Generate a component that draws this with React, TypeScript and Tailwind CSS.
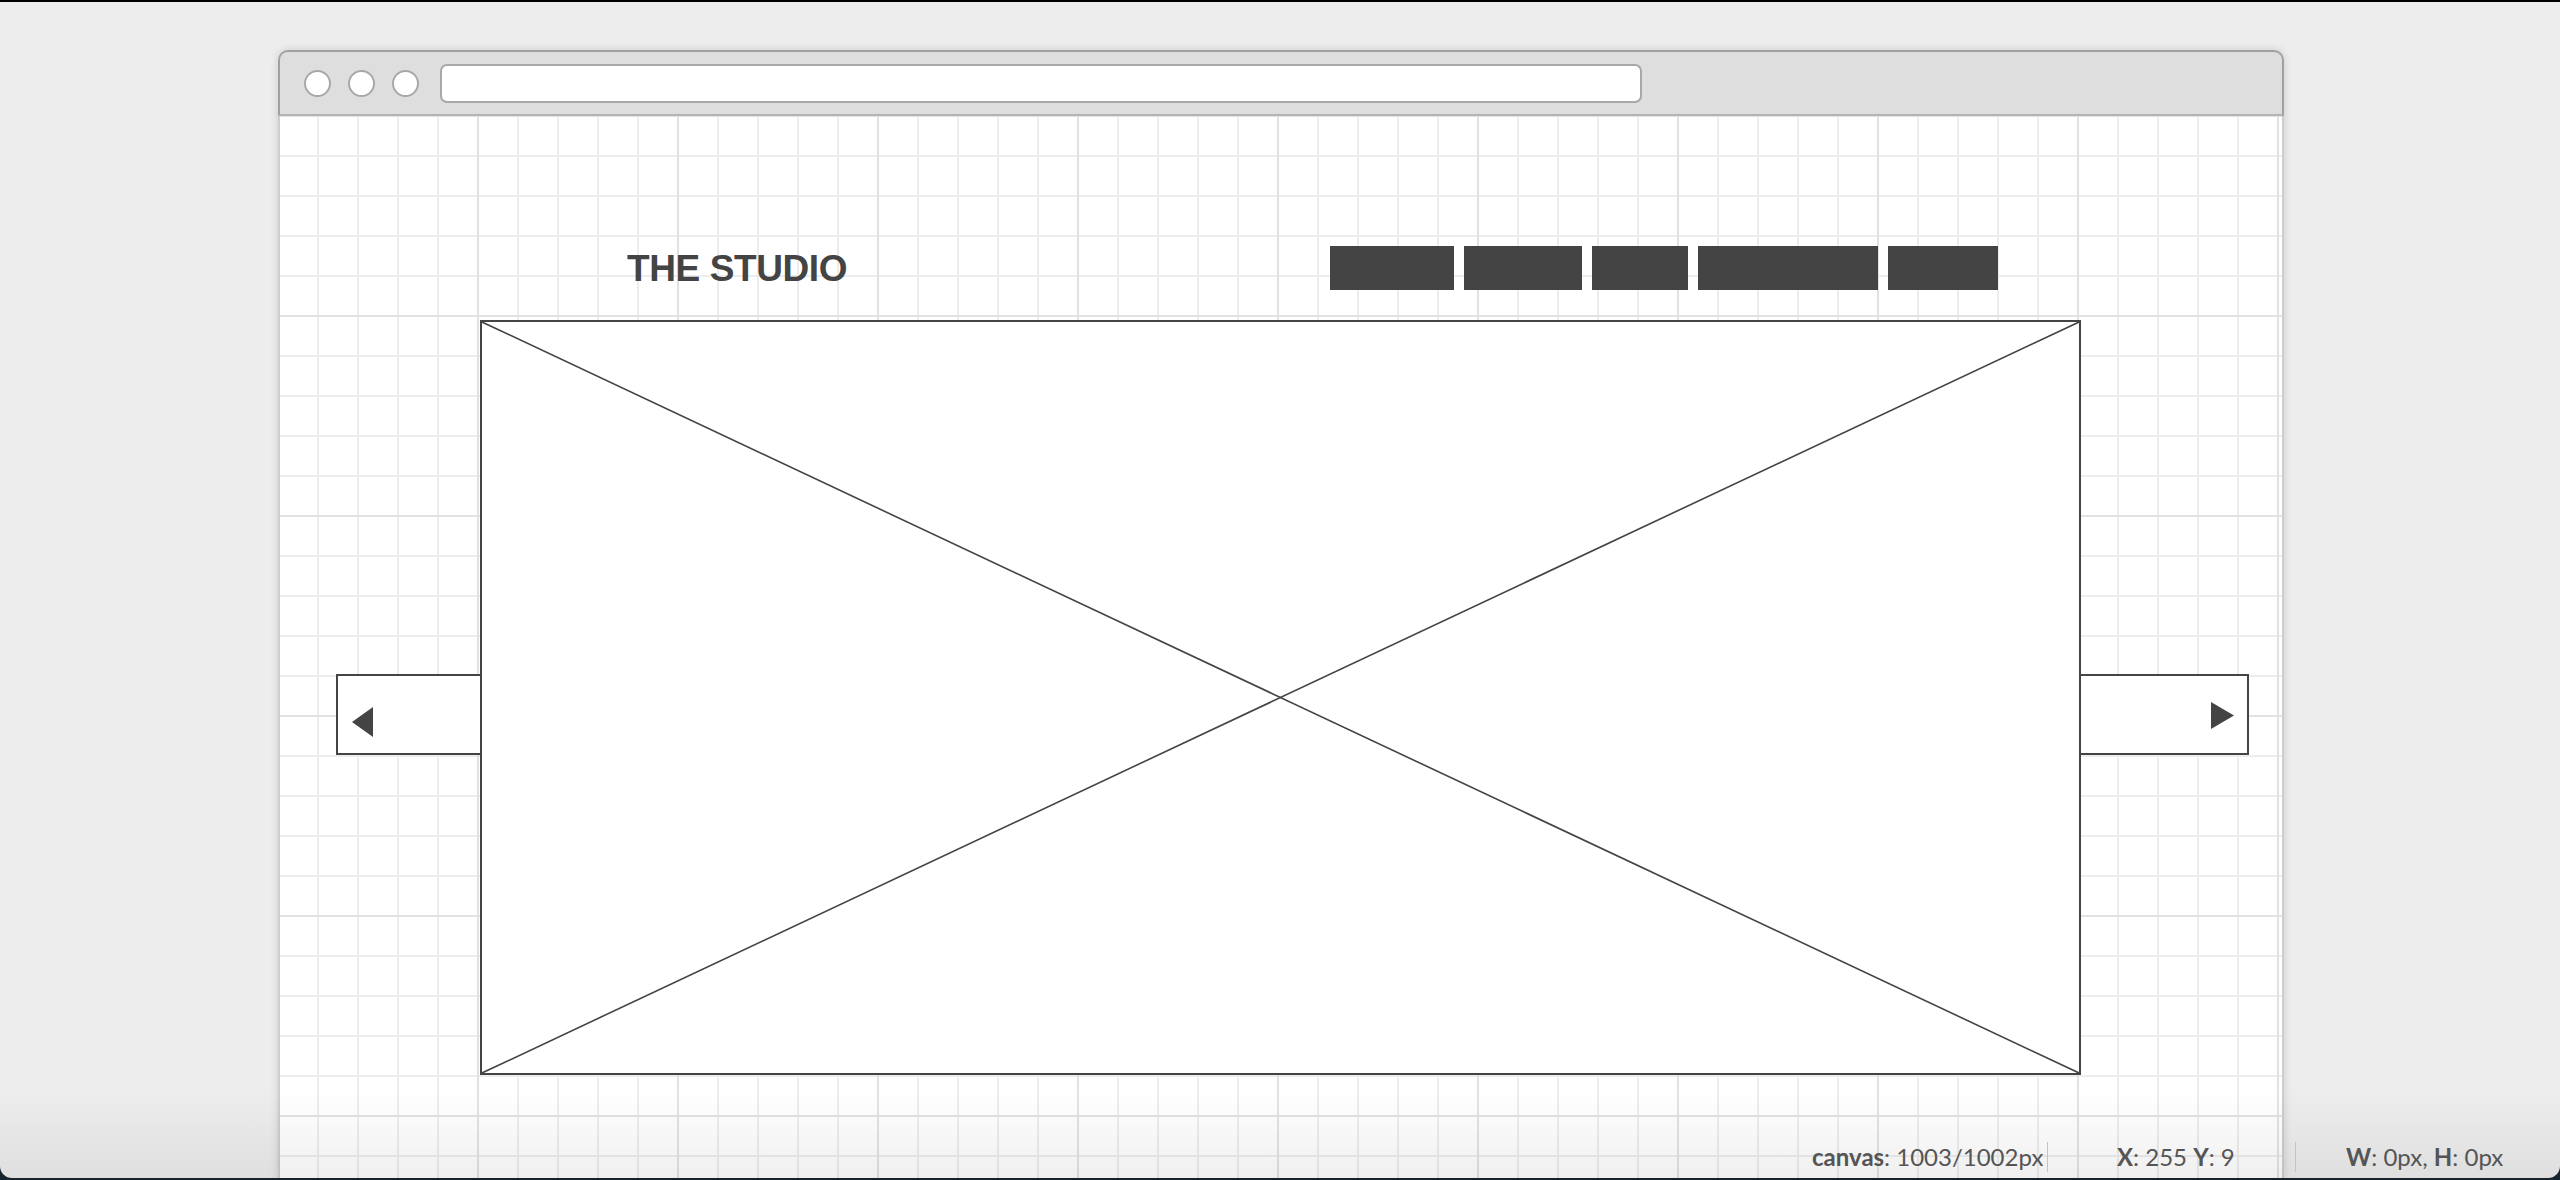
import React from 'react';

const NAV_WIDTHS = ['w-[124px]', 'w-[118px]', 'w-[96px]', 'w-[180px]', 'w-[110px]'];

const gridBg =
  '[background-image:linear-gradient(to_right,#e2e2e2_2px,transparent_2px),linear-gradient(to_bottom,#e2e2e2_2px,transparent_2px),linear-gradient(to_right,#ededed_2px,transparent_2px),linear-gradient(to_bottom,#ededed_2px,transparent_2px)] [background-size:200px_200px,200px_200px,40px_40px,40px_40px] [background-position:-3px_-1px,-3px_-1px,-3px_-1px,-3px_-1px]';

const TitleBar = () => (
  <div className="flex items-center h-[66px] bg-[#dedede] border-2 border-[#a0a0a0] border-b-[#b4b4b4] rounded-t-[10px] pl-[24px]">
    <div className="flex gap-[17px]">
      <span className="w-[27px] h-[27px] rounded-full border-2 border-[#a8a8a8] bg-white" />
      <span className="w-[27px] h-[27px] rounded-full border-2 border-[#a8a8a8] bg-white" />
      <span className="w-[27px] h-[27px] rounded-full border-2 border-[#a8a8a8] bg-white" />
    </div>
    <div className="ml-[21px] w-[1202px] h-[39px] rounded-[7px] border-2 border-[#a8a8a8] bg-white" />
  </div>
);

const Header = () => (
  <div className="flex items-start mt-[130px] h-[44px]">
    <h1 className="ml-[347px] mt-[4px] font-['Liberation_Sans',Arial,sans-serif] font-bold text-[37px] leading-[37px] tracking-[-0.4px] text-[#444444] whitespace-nowrap">
      THE STUDIO
    </h1>
    <nav className="ml-auto mr-[284px] flex gap-[10px]">
      {NAV_WIDTHS.map((w, i) => (
        <div key={i} className={`${w} h-[44px] bg-[#444444]`} />
      ))}
    </nav>
  </div>
);

const Slider = () => (
  <div className="flex items-start mt-[30px] pl-[56px]">
    <button className="mt-[354px] w-[144px] h-[81px] border-2 border-r-0 border-[#444444] bg-white flex items-start pl-[14px] pt-[31px]">
      <svg width="21" height="30" viewBox="0 0 21 30">
        <polygon points="21,0 21,30 0,15" fill="#444444" />
      </svg>
    </button>
    <div className="relative w-[1601px] h-[755px] border-2 border-[#444444] bg-white">
      <svg className="absolute inset-0 w-full h-full" viewBox="0 0 1597 751" preserveAspectRatio="none">
        <line x1="0" y1="0" x2="1597" y2="751" stroke="#444444" strokeWidth="1.6" />
        <line x1="1597" y1="0" x2="0" y2="751" stroke="#444444" strokeWidth="1.6" />
      </svg>
    </div>
    <button className="mt-[354px] w-[168px] h-[81px] border-2 border-l-0 border-[#444444] bg-white flex items-start pl-[130px] pt-[26px]">
      <svg width="23" height="27" viewBox="0 0 23 27">
        <polygon points="0,0 23,13.5 0,27" fill="#444444" />
      </svg>
    </button>
  </div>
);

const StatusBar = () => (
  <div className="absolute top-[1142px] left-[1812px] flex items-start h-[30px] font-['Lato','Noto_Sans',sans-serif] text-[24px] leading-[24px] text-[#555555] whitespace-nowrap">
    <div className="w-[235px] pt-[3px]">
      <b className="font-bold">canvas</b>: 1003/1002px
    </div>
    <span className="w-[1px] h-[30px] bg-[#c4c4c4]" />
    <div className="w-[247px] pl-[69px] pt-[3px]">
      <b className="font-bold">X</b>: 255 <b className="font-bold">Y</b>: 9
    </div>
    <span className="w-[1px] h-[30px] bg-[#c4c4c4]" />
    <div className="pl-[50px] pt-[3px]">
      <b className="font-bold">W</b>: 0px, <b className="font-bold">H</b>: 0px
    </div>
  </div>
);

export default function App() {
  return (
    <div className="relative w-[2560px] h-[1180px] overflow-hidden bg-[#17232d]">
      <div className="flex flex-col h-[1178px] bg-[#ededed] border-t-2 border-black rounded-b-[12px] overflow-hidden pt-[48px]">
        <div className="ml-[278px] w-[2006px] flex-1 flex flex-col shadow-[0_0_8px_rgba(0,0,0,0.14)] rounded-t-[10px]">
          <TitleBar />
          <div className={`flex-1 bg-white border-x-2 border-[#cdcdcd] ${gridBg}`}>
            <Header />
            <Slider />
          </div>
        </div>
      </div>
      <div className="pointer-events-none absolute left-0 right-0 top-[1090px] h-[88px] bg-gradient-to-b from-transparent to-black/[0.06] rounded-b-[12px]" />
      <StatusBar />
    </div>
  );
}
